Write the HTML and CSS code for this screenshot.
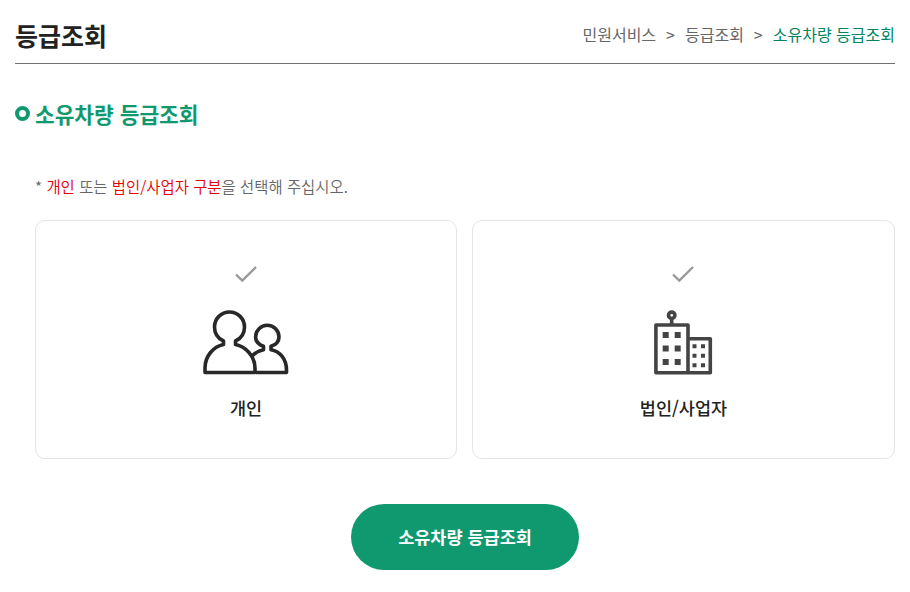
FILE: index.html
```html
<!DOCTYPE html>
<html lang="ko">
<head>
  <meta charset="UTF-8">
  <meta name="viewport" content="width=device-width, initial-scale=1.0">
  <title>등급조회</title>
  <link rel="stylesheet" href="styles.css">
</head>
<body>
  <div class="container">
    <!-- Header -->
    <div class="header">
      <h1>등급조회</h1>
      <ul class="location">
        <li>민원서비스</li>
        <li class="arrow">&gt;</li>
        <li>등급조회</li>
        <li class="arrow">&gt;</li>
        <li class="current">소유차량 등급조회</li>
      </ul>
    </div>

    <h2 class="sub-title">소유차량 등급조회</h2>

    <div class="content">
      <p class="notice">* <span>개인</span> 또는 <span>법인/사업자 구분</span>을 선택해 주십시오.</p>

      <!-- Type select -->
      <div class="type-list">
        <div class="type-item">
          <svg class="check" width="24" height="18" viewBox="0 0 24 18">
            <path d="M2 9.5L8.3 15.5L22 2"/>
          </svg>
          <svg class="icon person" width="86" height="66" viewBox="0 0 86 66">
            <path d="M53 62.500H83.500V60C83.500 49 77 41.500 68 39.800V36.300C73.500 34.500 76 31 76 27A11.700 11.700 0 0 0 52.600 27C52.600 31 55.500 34.500 60.500 36.300V39.800C56 40.700 52.500 42.500 49.500 45.500"/>
            <path d="M2 62.500V58C2 46 10.500 36.500 20.500 34.500V31C15 28.500 11.500 24 11.500 17A15 15 0 0 1 41.500 17C41.500 24 38 28.500 32.500 31V34.500C42.500 36.500 52 46 52 58V62.500Z"/>
          </svg>
          <strong>개인</strong>
        </div>
        <div class="type-item">
          <svg class="check" width="24" height="18" viewBox="0 0 24 18">
            <path d="M1 9.5L7.3 15.5L21 2"/>
          </svg>
          <svg class="icon building" width="60" height="66" viewBox="0 0 60 66">
            <circle cx="17.700" cy="5.300" r="3.200"/>
            <path d="M17.700 8.500V15M1.900 15H34V62.800H1.900ZM34 28.800H56.300V62.800H34"/>
            <path class="window" d="M8.700 22h6v6h-6zM20.700 22h6v6h-6zM8.700 35.500h6v6h-6zM20.700 35.500h6v6h-6zM8.700 49h6v6h-6zM20.700 49h6v6h-6zM38.500 34.200h4v4h-4zM47 34.200h4v4h-4zM38.500 43.700h4v4h-4zM47 43.700h4v4h-4zM38.500 53.200h4v4h-4zM47 53.200h4v4h-4z"/>
          </svg>
          <strong>법인/사업자</strong>
        </div>
      </div>

      <button type="button" class="search-button">소유차량 등급조회</button>
    </div>
  </div>
</body>
</html>
```
FILE: styles.css
```css
* {
  box-sizing: border-box;
  margin: 0;
  padding: 0;
}
body {
  font-family: "Noto Sans CJK KR", sans-serif;
  font-size: 16px;
  color: #666;
  background-color: #fff;
}
.container {
  padding: 0 15px;
}
/* Header */
.header {
  display: flex;
  justify-content: space-between;
  align-items: center;
  height: 64px;
  padding-top: 5px;
  border-bottom: 1px solid #707070;
}
.header h1 {
  padding-top: 2px;
  font-size: 25px;
  line-height: 36px;
  font-weight: 700;
  color: #222;
}
.location {
  display: flex;
  gap: 10px;
  list-style: none;
  line-height: 24px;
}
.location .current {
  color: #008560;
}
.sub-title {
  display: flex;
  align-items: center;
  gap: 5px;
  margin-top: 34px;
  font-size: 21.4px;
  line-height: 32px;
  font-weight: 700;
  color: #10996e;
}
.sub-title::before {
  content: "";
  box-sizing: border-box;
  width: 15px;
  height: 15px;
  margin-top: -2px;
  border: 4px solid #10996e;
  border-radius: 50%;
}
/* Content */
.content {
  padding-left: 20px;
}
.notice {
  margin-top: 44px;
  font-size: 15.43px;
  line-height: 24px;
  font-weight: 350;
  color: #666;
}
.notice span {
  color: #e60000;
}
/* Type select */
.type-list {
  display: grid;
  grid-template-columns: 422px 423px;
  gap: 15px;
  margin-top: 22px;
}
.type-item {
  display: flex;
  flex-direction: column;
  align-items: center;
  height: 239px;
  padding-top: 44px;
  border: 1px solid #e5e5e5;
  border-radius: 10px;
}
.type-item svg {
  fill: none;
}
.check {
  stroke: #999;
  stroke-width: 2.4;
}
.icon {
  margin-top: 27px;
  stroke-width: 3.6;
  stroke-linejoin: round;
}
.person {
  stroke: #282828;
}
.building {
  stroke: #444;
}
.type-item .window {
  fill: #444;
  stroke: none;
}
.type-item strong {
  margin-top: 18px;
  font-size: 17.5px;
  line-height: 28px;
  font-weight: 500;
  color: #222;
}
/* Button */
.search-button {
  display: block;
  width: 228px;
  height: 66px;
  margin: 45px auto 0;
  padding-bottom: 2px;
  border: none;
  border-radius: 33px;
  background-color: #10996e;
  font-family: inherit;
  font-size: 17.5px;
  font-weight: 700;
  color: #fff;
  cursor: pointer;
}
```
